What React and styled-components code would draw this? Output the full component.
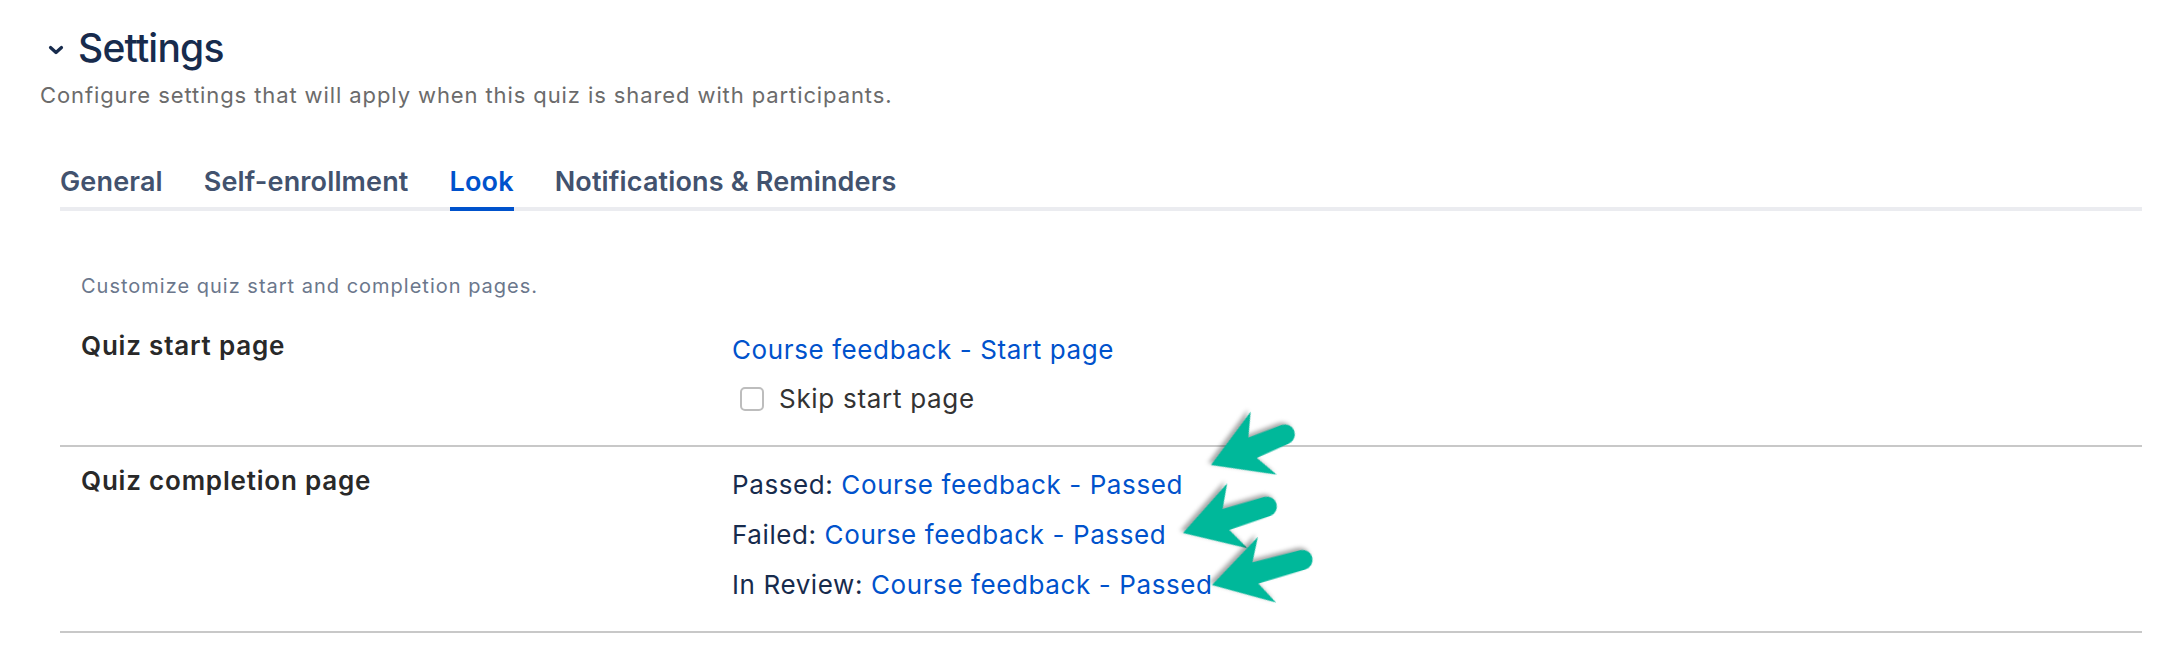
import React from "react";
import styled, { createGlobalStyle } from "styled-components";

const GlobalStyle = createGlobalStyle`
  body {
    margin: 0;
    background: #fff;
    font-family: Inter, "Liberation Sans", sans-serif;
  }
`;

const tabs = ["General", "Self-enrollment", "Look", "Notifications & Reminders"];

const outcomes = [
  { label: "Passed:", page: "Course feedback - Passed" },
  { label: "Failed:", page: "Course feedback - Passed" },
  { label: "In Review:", page: "Course feedback - Passed" },
];

// tip x, tip y, angle the arrow points at, shaft length
const arrows = [
  { x: 1211, y: 465, angle: 157.5, length: 80 },
  { x: 1183, y: 533, angle: 162.5, length: 88 },
  { x: 1212, y: 585, angle: 164.5, length: 94 },
];

const arrowPath = (len) =>
  `M0 0 L-57 -34 L-45 -11 L-${len} -10 A10 10 0 0 0 -${len} 10 L-45 11 L-57 34 Z`;

const App = () => {
  return (
    <Page>
      <GlobalStyle />
      <Header>
        <Chevron width="16" height="10" viewBox="0 0 16 10">
          <path d="M2.5 2.5 L8 7.5 L13.5 2.5" />
        </Chevron>
        <Title>Settings</Title>
      </Header>
      <Subtitle>
        Configure settings that will apply when this quiz is shared with
        participants.
      </Subtitle>

      <TabList>
        {tabs.map((t) => (
          <Tab key={t} active={t === "Look"}>
            {t}
          </Tab>
        ))}
      </TabList>

      <Panel>
        <Intro>Customize quiz start and completion pages.</Intro>

        <Row>
          <Label>Quiz start page</Label>
          <Values gap={15}>
            <Line>
              <Link href="#">Course feedback - Start page</Link>
            </Line>
            <CheckRow>
              <Checkbox type="checkbox" />
              <CheckText>Skip start page</CheckText>
            </CheckRow>
          </Values>
        </Row>

        <Row>
          <Label>Quiz completion page</Label>
          <Values gap={16}>
            {outcomes.map((o) => (
              <Line key={o.label}>
                {o.label} <Link href="#">{o.page}</Link>
              </Line>
            ))}
          </Values>
        </Row>
      </Panel>

      <Overlay width="2174" height="664">
        {arrows.map((a, i) => (
          <ArrowShape
            key={i}
            d={arrowPath(a.length)}
            transform={`translate(${a.x} ${a.y}) rotate(${a.angle})`}
          />
        ))}
      </Overlay>
    </Page>
  );
};
export default App;

const Page = styled.div`
  position: relative;
  box-sizing: border-box;
  width: 2174px;
  height: 664px;
  padding: 24px 32px 0 40px;
  overflow: hidden;
`;

const Header = styled.div`
  display: flex;
  align-items: center;
  height: 48px;
`;

const Chevron = styled.svg`
  margin: 4px 14px 0 8px;
  fill: none;
  stroke: #172b4d;
  stroke-width: 3.2;
  stroke-linecap: round;
  stroke-linejoin: round;
`;

const Title = styled.h1`
  margin: 0;
  font-size: 39px;
  line-height: 48px;
  font-weight: 500;
  color: #172b4d;
  letter-spacing: -0.8px;
`;

const Subtitle = styled.p`
  margin: 9px 0 0;
  font-size: 22px;
  line-height: 28px;
  letter-spacing: 0.9px;
  color: #6b6b6b;
`;

const TabList = styled.div`
  display: flex;
  gap: 41px;
  margin: 57px 0 0 20px;
  border-bottom: 4px solid #ebecf0;
`;

const Tab = styled.div`
  font-size: 27px;
  line-height: 32px;
  font-weight: 600;
  letter-spacing: 0.15px;
  padding-bottom: 9px;
  margin-bottom: -4px;
  border-bottom: 4px solid ${(p) => (p.active ? "#0052cc" : "transparent")};
  color: ${(p) => (p.active ? "#0052cc" : "#42526e")};
`;

const Panel = styled.div`
  margin-left: 20px;
`;

const Intro = styled.p`
  margin: 63px 0 14px 21px;
  font-size: 20px;
  line-height: 24px;
  letter-spacing: 1px;
  color: #6b778c;
`;

const Row = styled.div`
  display: grid;
  grid-template-columns: 651px 1fr;
  padding: 17px 0 29px 21px;
  border-bottom: 2px solid #c8c8c8;
`;

const Label = styled.div`
  font-size: 26px;
  line-height: 34px;
  font-weight: 600;
  letter-spacing: 0.8px;
  color: #292929;
`;

const Values = styled.div`
  display: flex;
  flex-direction: column;
  gap: ${(p) => p.gap}px;
  padding-top: 4px;
`;

const Line = styled.div`
  font-size: 26px;
  line-height: 34px;
  letter-spacing: 0.6px;
  color: #172b4d;
`;

const Link = styled.a`
  color: #0052cc;
  text-decoration: none;
`;

const CheckRow = styled.label`
  display: flex;
  align-items: center;
  gap: 15px;
  padding-left: 8px;
  font-size: 26px;
  line-height: 34px;
  letter-spacing: 0.7px;
  color: #333;
`;

const Checkbox = styled.input`
  appearance: none;
  margin: 0;
  width: 24px;
  height: 24px;
  box-sizing: border-box;
  border: 2px solid #bdbdbd;
  border-radius: 5px;
  background: #fff;
`;

const CheckText = styled.span``;

const Overlay = styled.svg`
  position: absolute;
  top: 0;
  left: 0;
  pointer-events: none;
  overflow: visible;
`;

const ArrowShape = styled.path`
  fill: #00b89a;
  filter: drop-shadow(2px 3px 2px rgba(0, 0, 0, 0.35));
`;
